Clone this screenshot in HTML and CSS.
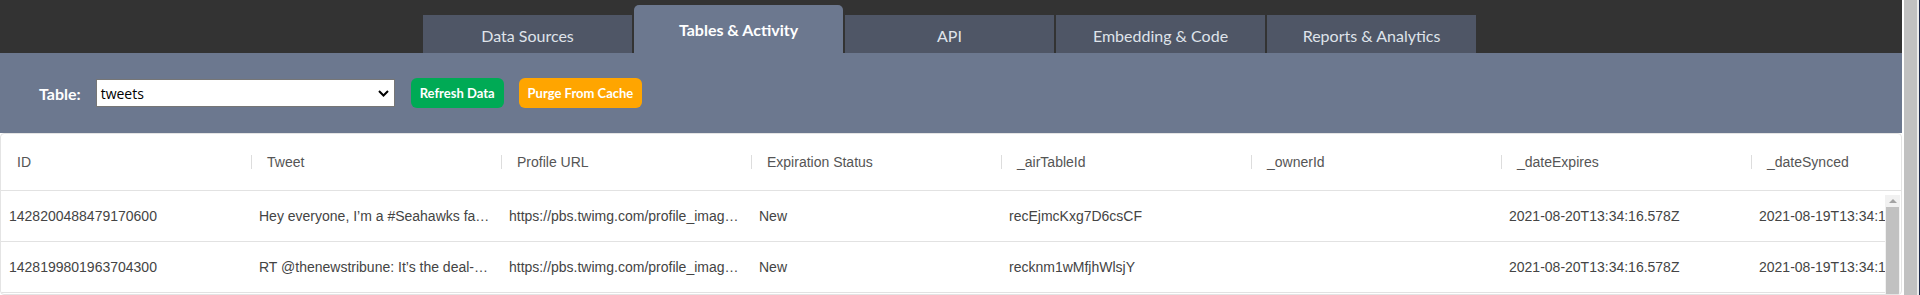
FILE: index.html
```html
<!DOCTYPE html>
<html>
<head>
<title>Tables &amp; Activity</title>
<link rel="stylesheet" href="styles.css">
</head>
<body>
    <div class="page">
        <div class="app">
            <div class="topbar">
                <nav class="tabs">
                    <a class="tab">Data Sources</a>
                    <a class="tab active">Tables &amp; Activity</a>
                    <a class="tab">API</a>
                    <a class="tab">Embedding &amp; Code</a>
                    <a class="tab">Reports &amp; Analytics</a>
                </nav>
            </div>

            <div class="toolbar">
                <label class="toolbar-label">Table:</label>
                <div class="select">
                    <span>tweets</span>
                    <svg width="11" height="7" viewBox="0 0 11 7"><path d="M1 1l4.5 4.5L10 1" fill="none" stroke="#000" stroke-width="2"/></svg>
                </div>
                <button class="btn btn-green">Refresh Data</button>
                <button class="btn btn-orange">Purge From Cache</button>
            </div>

            <div class="grid">
                <div class="grid-head">
                    <div class="head-cell">ID</div>
                    <div class="head-cell">Tweet</div>
                    <div class="head-cell">Profile URL</div>
                    <div class="head-cell">Expiration Status</div>
                    <div class="head-cell">_airTableId</div>
                    <div class="head-cell">_ownerId</div>
                    <div class="head-cell">_dateExpires</div>
                    <div class="head-cell">_dateSynced</div>
                </div>
                <div class="grid-body">
                    <div class="grid-rows">
                        <div class="row">
                            <div class="cell">1428200488479170600</div>
                            <div class="cell">Hey everyone, I’m a #Seahawks fan and I’m ready for the season</div>
                            <div class="cell">https://pbs.twimg.com/profile_images/1421986574216372224/normal.jpg</div>
                            <div class="cell">New</div>
                            <div class="cell">recEjmcKxg7D6csCF</div>
                            <div class="cell"></div>
                            <div class="cell">2021-08-20T13:34:16.578Z</div>
                            <div class="cell">2021-08-19T13:34:16.578Z</div>
                        </div>
                        <div class="row">
                            <div class="cell">1428199801963704300</div>
                            <div class="cell">RT @thenewstribune: It’s the deal-of-the-week for fans</div>
                            <div class="cell">https://pbs.twimg.com/profile_images/1389716233004339203/normal.jpg</div>
                            <div class="cell">New</div>
                            <div class="cell">recknm1wMfjhWlsjY</div>
                            <div class="cell"></div>
                            <div class="cell">2021-08-20T13:34:16.578Z</div>
                            <div class="cell">2021-08-19T13:34:16.578Z</div>
                        </div>
                        <div class="row">
                            <div class="cell">1428198877310017500</div>
                            <div class="cell">Game day vibes in Seattle today</div>
                            <div class="cell">https://pbs.twimg.com/profile_images/1402557190884704256/normal.jpg</div>
                            <div class="cell">New</div>
                            <div class="cell">recQm2Zt8vXhA1bPe</div>
                            <div class="cell"></div>
                            <div class="cell">2021-08-20T13:34:16.578Z</div>
                            <div class="cell">2021-08-19T13:34:16.578Z</div>
                        </div>
                    </div>
                    <div class="vscroll">
                        <div class="vscroll-arrow"></div>
                        <div class="vscroll-thumb"></div>
                    </div>
                </div>
            </div>
        </div>
        <div class="page-scroll">
            <div class="page-scroll-thumb"></div>
        </div>
    </div>
</body>
</html>
```

FILE: styles.css
```css
html, body {
    margin: 0;
    padding: 0;
    height: 100%;
    overflow: hidden;
    background-color: #ffffff;
}

.page {
    display: flex;
    height: 100vh;
}

.app {
    width: 1902px;
    flex: none;
    display: flex;
    flex-direction: column;
}

/* top navigation */
.topbar {
    height: 53px;
    flex: none;
    background-color: #333333;
    display: flex;
    justify-content: center;
    align-items: flex-end;
    padding-right: 3px;
}

.tabs {
    display: flex;
    align-items: flex-end;
    gap: 2px;
}

.tab {
    width: 209px;
    height: 38px;
    box-sizing: border-box;
    padding-top: 11px;
    text-align: center;
    background-color: #4f5666;
    color: #dfe3ea;
    font-family: 'Lato', sans-serif;
    font-size: 16px;
    line-height: 20px;
    cursor: pointer;
}

.tab.active {
    height: 48px;
    padding-top: 15px;
    background-color: #6c788f;
    color: #ffffff;
    font-weight: 700;
    border-radius: 5px 5px 0 0;
}

/* toolbar */
.toolbar {
    height: 80px;
    flex: none;
    background-color: #6c788f;
    display: flex;
    align-items: center;
    padding-left: 39px;
}

.toolbar-label {
    font-family: 'Lato', sans-serif;
    font-weight: 700;
    font-size: 16px;
    color: #ffffff;
    margin-right: 15px;
}

.select {
    width: 299px;
    height: 28px;
    box-sizing: border-box;
    border: 1px solid #767676;
    background-color: #ffffff;
    display: flex;
    align-items: center;
    justify-content: space-between;
    padding: 0 5px 0 4px;
    font-family: 'Open Sans', sans-serif;
    font-size: 14px;
    color: #000000;
    margin-right: 16px;
}

.btn {
    height: 30px;
    padding: 0 9px;
    border: none;
    border-radius: 6px;
    color: #ffffff;
    font-family: 'Lato', sans-serif;
    font-weight: 700;
    font-size: 13px;
    margin-right: 15px;
    cursor: pointer;
}

.btn-green {
    background-color: #00aa55;
}

.btn-orange {
    background-color: #ffa500;
}

/* data grid */
.grid {
    flex: 1;
    min-height: 0;
    display: flex;
    flex-direction: column;
    background-color: #ffffff;
    border: 1px solid #e4e4e4;
    border-radius: 4px;
    overflow: hidden;
    font-family: 'Liberation Sans', Arial, sans-serif;
    font-size: 14px;
    color: #444444;
}

.grid-head {
    height: 57px;
    flex: none;
    box-sizing: border-box;
    display: flex;
    overflow: hidden;
    border-bottom: 1px solid #e2e2e2;
}

.head-cell {
    width: 250px;
    flex: none;
    display: flex;
    align-items: center;
    color: #555555;
}

.head-cell::before {
    content: "";
    width: 1px;
    height: 14px;
    margin-right: 15px;
    background-color: #dddddd;
}

.head-cell:first-child::before {
    background-color: transparent;
}

.grid-body {
    flex: 1;
    min-height: 0;
    display: flex;
}

.grid-rows {
    flex: 1;
    min-width: 0;
    overflow: hidden;
}

.row {
    height: 51px;
    box-sizing: border-box;
    display: flex;
    align-items: center;
    border-bottom: 1px solid #e2e2e2;
}

.cell {
    width: 250px;
    flex: none;
    box-sizing: border-box;
    padding: 0 10px 0 8px;
    white-space: nowrap;
    overflow: hidden;
    text-overflow: ellipsis;
}

.vscroll {
    width: 15px;
    flex: none;
    margin: 4px 1px 0 0;
    background-color: #f1f1f1;
    display: flex;
    flex-direction: column;
}

.vscroll-arrow {
    height: 12px;
    display: flex;
    justify-content: center;
    align-items: center;
}

.vscroll-arrow::before {
    content: "";
    border-left: 4px solid transparent;
    border-right: 4px solid transparent;
    border-bottom: 4px solid #a3a3a3;
}

.vscroll-thumb {
    flex: 1;
    margin: 0 1px;
    background-color: #c1c1c1;
}

/* window scrollbar */
.page-scroll {
    width: 18px;
    flex: none;
    box-sizing: border-box;
    display: flex;
    border-left: 2px solid #ffffff;
    border-right: 1px solid #1d2a4b;
    padding-right: 2px;
    background-color: #ececec;
}

.page-scroll-thumb {
    flex: 1;
    background-color: #c1c1c1;
}
```
